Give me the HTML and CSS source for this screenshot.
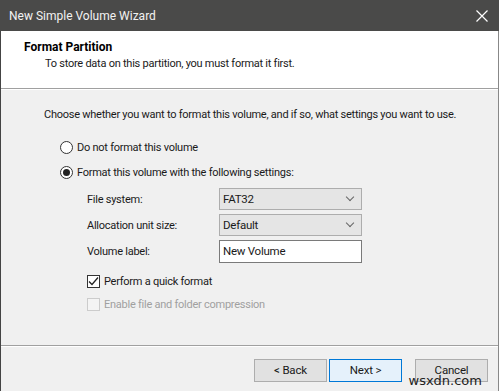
FILE: index.html
```html
<!DOCTYPE html>
<html>
<head>
    <title>New Simple Volume Wizard</title>
    <link rel="stylesheet" href="styles.css">
</head>
<body>
    <div class="window">
        <div class="titlebar">
            <span class="title">New Simple Volume Wizard</span>
            <span class="close">
                <svg width="12" height="12" viewBox="0 0 12 12"><path d="M0.5 0.5 L11.5 11.5 M11.5 0.5 L0.5 11.5" stroke="#ffffff" stroke-width="1.2" fill="none"/></svg>
            </span>
        </div>
        <div class="header">
            <div class="heading">Format Partition</div>
            <div class="subheading">To store data on this partition, you must format it first.</div>
        </div>
        <div class="content">
            <p class="intro">Choose whether you want to format this volume, and if so, what settings you want to use.</p>
            <div class="option">
                <span class="radio"></span>
                <span>Do not format this volume</span>
            </div>
            <div class="option">
                <span class="radio checked"></span>
                <span>Format this volume with the following settings:</span>
            </div>
            <div class="settings">
                <div class="field">
                    <span class="label">File system:</span>
                    <div class="select">FAT32<span class="arrow"></span></div>
                </div>
                <div class="field">
                    <span class="label">Allocation unit size:</span>
                    <div class="select">Default<span class="arrow"></span></div>
                </div>
                <div class="field">
                    <span class="label">Volume label:</span>
                    <div class="input">New Volume</div>
                </div>
                <div class="check-row quick">
                    <span class="checkbox">
                        <svg width="11" height="11" viewBox="0 0 11 11"><path d="M1 5.5 L4 8.5 L10 1.5" stroke="#222" stroke-width="1.3" fill="none"/></svg>
                    </span>
                    <span>Perform a quick format</span>
                </div>
                <div class="check-row disabled">
                    <span class="checkbox"></span>
                    <span>Enable file and folder compression</span>
                </div>
            </div>
        </div>
        <div class="footer">
            <button class="btn">&lt; Back</button>
            <button class="btn default">Next &gt;</button>
            <button class="btn cancel">Cancel</button>
        </div>
        <span class="watermark">wsxdn.com</span>
    </div>
</body>
</html>
```

FILE: styles.css
```css
body {
    margin: 0;
    font-family: Roboto, 'Liberation Sans', sans-serif;
    font-size: 11px;
    letter-spacing: -0.25px;
    color: #1a1a1a;
    background: #f0f0f0;
}

.window {
    position: relative;
    width: 499px;
    height: 391px;
    display: flex;
    flex-direction: column;
    border-left: 1px solid #444;
    border-right: 1px solid #888;
    background: #f0f0f0;
    box-sizing: border-box;
}

.titlebar {
    height: 31px;
    flex-shrink: 0;
    background: #4a4a49;
    display: flex;
    align-items: center;
    justify-content: space-between;
    padding: 0 11px 0 9px;
    margin-left: -1px;
    margin-right: -1px;
}

.title {
    color: #f2f2f2;
    font-size: 12px;
    letter-spacing: 0;
}

.close {
    display: flex;
}

.header {
    height: 58px;
    flex-shrink: 0;
    background: #ffffff;
    border-bottom: 1px solid #a0a0a0;
    box-shadow: 0 1px 0 #ffffff;
    padding: 9px 0 0 23px;
    box-sizing: border-box;
    line-height: 15px;
}

.heading {
    font-weight: 700;
    font-size: 12px;
    letter-spacing: 0;
    color: #000;
}

.subheading {
    padding-left: 21px;
    margin-top: 1px;
}

.content {
    flex: 1;
    padding: 18px 0 0 43px;
    border-bottom: 1px solid #a0a0a0;
    box-shadow: 0 1px 0 #ffffff;
}

.intro {
    margin: 0 0 12px;
    line-height: 16px;
    white-space: nowrap;
}

.option {
    display: flex;
    align-items: center;
    gap: 4px;
    margin-left: 16px;
    height: 25px;
}

.radio {
    width: 11px;
    height: 11px;
    border: 1px solid #333;
    border-radius: 50%;
    background: #fff;
    display: flex;
    align-items: center;
    justify-content: center;
}

.radio.checked::after {
    content: "";
    width: 7px;
    height: 7px;
    border-radius: 50%;
    background: #222;
}

.settings {
    margin-left: 43px;
    margin-top: 1px;
}

.field {
    display: flex;
    align-items: center;
    height: 26px;
}

.label {
    width: 132px;
}

.select, .input {
    width: 143px;
    height: 22px;
    box-sizing: border-box;
    border: 1px solid #adadad;
    display: flex;
    align-items: center;
    justify-content: space-between;
    padding: 0 8px 0 3px;
    font-size: 11.5px;
}

.select {
    background: #e5e5e5;
}

.input {
    background: #ffffff;
    border-color: #7a7a7a;
    height: 23px;
}

.arrow {
    width: 5px;
    height: 5px;
    border-right: 1px solid #666;
    border-bottom: 1px solid #666;
    transform: rotate(45deg);
    margin-top: -4px;
}

.check-row {
    display: flex;
    align-items: center;
    gap: 4px;
    height: 23px;
}

.check-row.quick {
    margin-top: 6px;
}

.checkbox {
    width: 13px;
    height: 13px;
    box-sizing: border-box;
    border: 1px solid #333;
    background: #fff;
    display: flex;
    align-items: center;
    justify-content: center;
}

.check-row.disabled {
    color: #a0a0a0;
}

.check-row.disabled .checkbox {
    border-color: #cccccc;
    background: #f4f4f4;
}

.footer {
    height: 45px;
    flex-shrink: 0;
    display: flex;
    align-items: center;
    padding-left: 253px;
    padding-top: 3px;
    box-sizing: border-box;
}

.btn {
    width: 73px;
    height: 23px;
    font-family: inherit;
    font-size: 11.5px;
    letter-spacing: -0.2px;
    color: #1a1a1a;
    background: #e1e1e1;
    border: 1px solid #adadad;
    margin-right: 2px;
    padding: 0;
}

.btn.default {
    background: #e5f1fb;
    border: 1px solid #0078d7;
}

.btn.cancel {
    margin-left: 11px;
}

.watermark {
    position: absolute;
    right: 16px;
    bottom: 3px;
    font-family: 'DejaVu Sans', sans-serif;
    font-size: 13px;
    letter-spacing: 0;
    color: #222;
}
```
